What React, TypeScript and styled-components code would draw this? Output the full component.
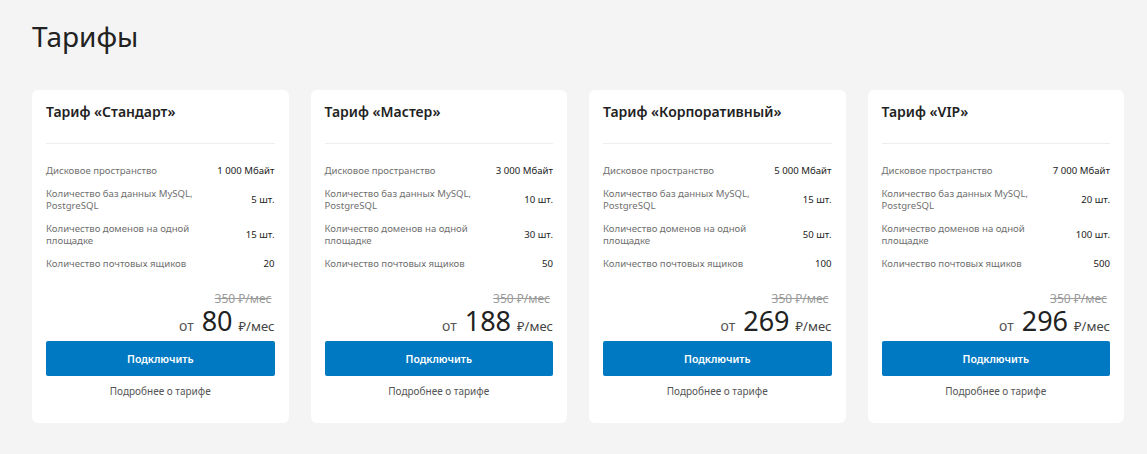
import React from 'react';
import styled, { createGlobalStyle } from 'styled-components';

const GlobalStyle = createGlobalStyle`
	html, body {
		margin: 0;
		padding: 0;
		background: #f4f4f4;
		font-family: 'Noto Sans', 'Open Sans', sans-serif;
		color: #222;
	}
	* {
		box-sizing: border-box;
	}
`;

const Page = styled.div`
	padding: 17px 23px 32px 32px;
	min-height: 454px;
`;

const Title = styled.h1`
	margin: 0 0 35px;
	font-size: 28px;
	font-weight: 400;
	line-height: 38px;
	color: #222;
`;

const Grid = styled.div`
	display: grid;
	grid-template-columns: repeat(4, 1fr);
	gap: 22px;
`;

const Card = styled.div`
	background: #fff;
	border-radius: 6px;
	padding: 12px 14px 25px;
	display: flex;
	flex-direction: column;
`;

const CardTitle = styled.div`
	font-size: 14px;
	font-weight: 600;
	line-height: 20px;
	padding-bottom: 21px;
	border-bottom: 1px solid #eeeeee;
	margin-bottom: 21px;
`;

const Specs = styled.div`
	display: flex;
	flex-direction: column;
	gap: 11px;
`;

const Spec = styled.div`
	display: flex;
	align-items: center;
	justify-content: space-between;
	gap: 12px;
	font-size: 9.6px;
	line-height: 12px;
`;

const SpecLabel = styled.span`
	color: #707070;
	max-width: 155px;
`;

const SpecValue = styled.span`
	color: #222;
	white-space: nowrap;
`;

const Pricing = styled.div`
	margin-top: 21px;
	display: flex;
	flex-direction: column;
	align-items: flex-end;
`;

const OldPrice = styled.div`
	font-size: 12px;
	line-height: 16px;
	color: #9a9a9a;
	text-decoration: line-through;
	margin-right: 3px;
`;

const Price = styled.div`
	display: flex;
	align-items: baseline;
	line-height: 28px;
	color: #222;
`;

const From = styled.span`
	font-size: 14px;
	color: #555;
	margin-right: 8px;
`;

const Amount = styled.span`
	font-size: 27px;
	margin-right: 6px;
`;

const Unit = styled.span`
	font-size: 13px;
	color: #444;
`;

const Button = styled.button`
	margin-top: 1px;
	height: 35px;
	border: none;
	border-radius: 2px;
	background: #0079c2;
	color: #fff;
	font-family: inherit;
	font-size: 10.5px;
	font-weight: 600;
	cursor: pointer;
`;

const More = styled.a`
	margin-top: 8px;
	text-align: center;
	font-size: 10px;
	line-height: 14px;
	color: #555;
	text-decoration: none;
`;

const tariffs = [
	{ name: 'Стандарт', disk: '1 000', db: '5', domains: '15', mail: '20', price: '80' },
	{ name: 'Мастер', disk: '3 000', db: '10', domains: '30', mail: '50', price: '188' },
	{ name: 'Корпоративный', disk: '5 000', db: '15', domains: '50', mail: '100', price: '269' },
	{ name: 'VIP', disk: '7 000', db: '20', domains: '100', mail: '500', price: '296' },
];

export default function App() {
	return (
		<>
			<GlobalStyle />
			<Page>
				<Title>Тарифы</Title>
				<Grid>
					{tariffs.map((t) => (
						<Card key={t.name}>
							<CardTitle>Тариф «{t.name}»</CardTitle>
							<Specs>
								<Spec>
									<SpecLabel>Дисковое пространство</SpecLabel>
									<SpecValue>{t.disk} Мбайт</SpecValue>
								</Spec>
								<Spec>
									<SpecLabel>Количество баз данных MySQL, PostgreSQL</SpecLabel>
									<SpecValue>{t.db} шт.</SpecValue>
								</Spec>
								<Spec>
									<SpecLabel>Количество доменов на одной площадке</SpecLabel>
									<SpecValue>{t.domains} шт.</SpecValue>
								</Spec>
								<Spec>
									<SpecLabel>Количество почтовых ящиков</SpecLabel>
									<SpecValue>{t.mail}</SpecValue>
								</Spec>
							</Specs>
							<Pricing>
								<OldPrice>350 ₽/мес</OldPrice>
								<Price>
									<From>от</From>
									<Amount>{t.price}</Amount>
									<Unit>₽/мес</Unit>
								</Price>
							</Pricing>
							<Button>Подключить</Button>
							<More href="#">Подробнее о тарифе</More>
						</Card>
					))}
				</Grid>
			</Page>
		</>
	);
}
